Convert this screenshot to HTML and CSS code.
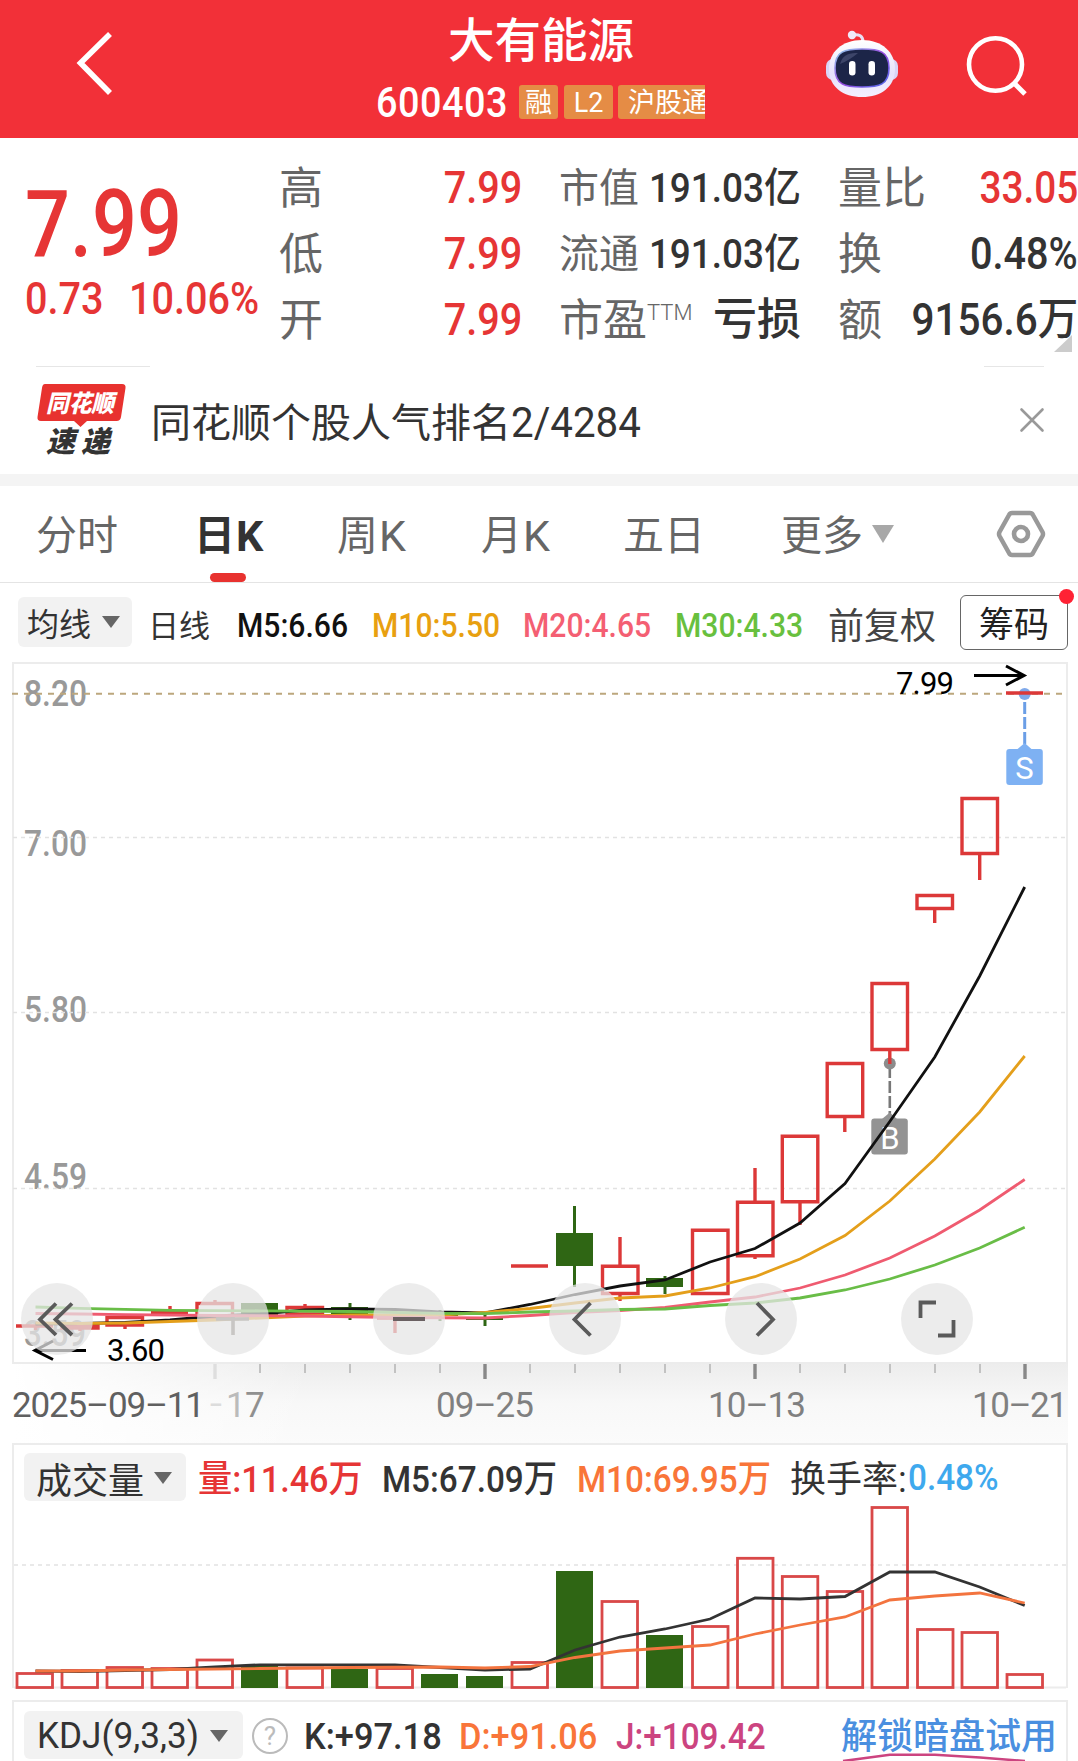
FILE: index.html
```html
<!DOCTYPE html>
<html lang="zh-CN">
<head>
<meta charset="utf-8">
<title>大有能源 600403</title>
<link rel="stylesheet" href="styles.css">
</head>
<body>
<div class="app">
  <header class="topbar">
    <svg class="back" width="44" height="70" viewBox="0 0 44 70"><path d="M39 5 9.500 34 39 64" fill="none" stroke="#fff" stroke-width="5.6"/></svg>
    <div class="heading">
      <h1>大有能源</h1>
      <div class="sub"><span class="code"><span class="n">600403</span></span><span class="tag t1">融</span><span class="tag t2">L2</span><span class="tag t3">沪股通</span></div>
    </div>
    <svg class="robot" width="74" height="68" viewBox="0 0 74 68">
      <defs>
        <linearGradient id="shell" x1="0" y1="0" x2="0" y2="1"><stop offset="0" stop-color="#fff"/><stop offset=".6" stop-color="#e6e2fb"/><stop offset="1" stop-color="#f4efff"/></linearGradient>
        <linearGradient id="rim" x1="0" y1="0" x2="1" y2="1"><stop offset="0" stop-color="#8fd0ea"/><stop offset=".5" stop-color="#9a4be0"/><stop offset="1" stop-color="#4d6bea"/></linearGradient>
      </defs>
      <path d="M27 5q11-2 11 7" fill="none" stroke="#e8e0f4" stroke-width="3"/>
      <circle cx="27" cy="5" r="4.2" fill="#f1eafa"/>
      <rect x="1" y="29" width="14" height="21" rx="7" fill="#d9d5f6"/><rect x="59" y="29" width="14" height="21" rx="7" fill="#d9d5f6"/>
      <path d="M37 10C57 10 70 22 70 39 70 57 56 67 37 67S4 57 4 39C4 22 17 10 37 10Z" fill="url(#shell)"/>
      <path d="M37 19C54 19 64 21 64 38S54 57 37 57 10 55 10 38 20 19 37 19Z" fill="#1c2548" stroke="url(#rim)" stroke-width="1.6"/>
      <path d="M15 34q3-12 18-11-8 7-18 11Z" fill="#4b5378" opacity=".7"/>
      <rect x="24" y="31" width="6.5" height="14.500" rx="3.2" fill="#fff"/><rect x="43.500" y="31" width="6.500" height="14.500" rx="3.200" fill="#fff"/>
    </svg>
    <svg class="search" width="64" height="64" viewBox="0 0 64 64"><ellipse cx="30.500" cy="30.500" rx="26.500" ry="26.200" fill="none" stroke="#fff" stroke-width="4.600"/><path d="M49 49 60 60" stroke="#fff" stroke-width="5"/></svg>
  </header>

  <section class="quote">
    <div class="price">
      <div class="last"><span class="n">7.99</span></div>
      <div class="chg"><span class="n">0.73</span><span class="n">10.06%</span></div>
    </div>
    <dl class="stats">
      <dt>高</dt><dd class="up"><span class="n">7.99</span></dd><dt class="sm">市值</dt><dd class="cap"><span class="n">191.03亿</span></dd><dt>量比</dt><dd class="up ratio"><span class="n">33.05</span></dd>
      <dt>低</dt><dd class="up"><span class="n">7.99</span></dd><dt class="sm">流通</dt><dd class="cap"><span class="n">191.03亿</span></dd><dt>换</dt><dd><span class="n">0.48%</span></dd>
      <dt>开</dt><dd class="up"><span class="n">7.99</span></dd><dt>市盈<sup>TTM</sup></dt><dd class="loss">亏损</dd><dt>额</dt><dd class="amount"><span class="n">9156.6万</span></dd>
    </dl>
    <i class="corner"></i>
  </section>

  <section class="notice">
    <svg class="logo" width="92" height="76" viewBox="0 0 92 76">
      <path d="M9 1H86q4 0 3.500 4L85 34q-.6 4-4.500 4H51l-6.500 6L38 38H5q-4 0-3.500-4L6 5q.5-4 3-4Z" fill="#e8322f"/>
      <text x="10" y="28.500" class="lg1" textLength="68" lengthAdjust="spacingAndGlyphs">同花顺</text>
      <text x="10" y="69" class="lg2" textLength="29" lengthAdjust="spacingAndGlyphs">速</text>
      <text x="45" y="69" class="lg2" textLength="29" lengthAdjust="spacingAndGlyphs">递</text>
    </svg>
    <p>同花顺个股人气排名<span class="n">2/4284</span></p>
    <svg class="close" width="26" height="26" viewBox="0 0 26 26"><path d="M2.500 2.500 23.500 23.500M23.500 2.500 2.500 23.500" stroke="#999" stroke-width="2.600" stroke-linecap="round"/></svg>
  </section>

  <nav class="tabs">
    <span>分时</span><span class="on">日<span class="k">K</span></span><span>周<span class="k">K</span></span><span>月<span class="k">K</span></span><span>五日</span>
    <span>更多<i class="tri grey"></i></span>
    <svg width="50" height="48" viewBox="0 0 50 48"><path d="M16 3H34Q36 3 37 5L46.500 22Q47.500 24 46.500 26L37 43Q36 45 34 45H16Q14 45 13 43L3.500 26Q2.500 24 3.500 22L13 5Q14 3 16 3Z" fill="none" stroke="#999" stroke-width="4.500"/><circle cx="25" cy="24" r="7" fill="none" stroke="#999" stroke-width="4.600"/></svg>
  </nav>

  <section class="ma">
    <span class="drop">均线<i class="tri"></i></span>
    <span class="dl">日线</span>
    <span class="n m5">M5:6.66</span><span class="n m10">M10:5.50</span><span class="n m20">M20:4.65</span><span class="n m30">M30:4.33</span>
    <span class="adj">前复权</span>
    <span class="chip">筹码<i></i></span>
  </section>

  <svg class="kline" width="1078" height="781" viewBox="0 662 1078 781">
    <defs>
      <linearGradient id="fadeY" x1="0" y1="0" x2="0" y2="1"><stop offset="0" stop-color="#ededed"/><stop offset=".5" stop-color="#f8f8f8"/><stop offset="1" stop-color="#fbfbfb"/></linearGradient>
      <linearGradient id="fadeX" x1="0" y1="0" x2="1" y2="0"><stop offset="0" stop-color="#fff"/><stop offset="1" stop-color="#fff" stop-opacity="0"/></linearGradient>
    </defs>
    <rect x="13" y="1364" width="1055" height="79" fill="url(#fadeY)"/>
    <rect x="13" y="1364" width="300" height="79" fill="url(#fadeX)"/>
    <rect x="13" y="663" width="1054" height="700" fill="#fff" stroke="#ececec" stroke-width="2"/>
    <g class="axis">
      <text x="24" y="705.500" textLength="63" lengthAdjust="spacingAndGlyphs">8.20</text><text x="24" y="855.500" textLength="63" lengthAdjust="spacingAndGlyphs">7.00</text>
      <text x="24" y="1022" textLength="63" lengthAdjust="spacingAndGlyphs">5.80</text><text x="24" y="1189" textLength="63" lengthAdjust="spacingAndGlyphs">4.59</text>
      <text x="24" y="1346" textLength="62" lengthAdjust="spacingAndGlyphs">3.59</text>
    </g>
    <path class="grid" d="M13 837.500H1067M13 1012.500H1067M13 1188.500H1067"/>
    <path d="M12 693.800H1066" stroke="#bca77d" stroke-width="2" stroke-dasharray="6 6"/>
    <text class="note" x="896" y="694" textLength="58">7.99</text>
    <path class="arrow" d="M974 675.500H1024M1006 666 1024 675.500 1006 685"/>
    <text class="note" x="107" y="1361" textLength="58">3.60</text>
    <path class="arrow" d="M86 1350.500H35M53 1359.500 35 1350.500 53 1341"/>

    <path d="M1024.700 702V744" stroke="#6b9ee6" stroke-width="3" stroke-dasharray="12 3"/>
    <circle cx="1024.700" cy="694" r="6" fill="#7fa9ea"/>
    <path d="M1017 749.500 1024.700 743 1032 749.500Z" fill="#7eb1f3"/><rect x="1006.300" y="749" width="36.500" height="36" rx="3" fill="#7eb1f3"/>
    <text class="mark" x="1024.500" y="778.500">S</text>
    <path d="M889.800 1066V1114" stroke="#777" stroke-width="2.600" stroke-dasharray="12 3"/>
    <circle cx="889.800" cy="1063.500" r="6" fill="#8c8c8c"/>
    <path d="M882 1119 889.800 1112.500 897 1119Z" fill="#939393"/><rect x="871.300" y="1118.500" width="36.500" height="36" rx="3" fill="#939393"/>
    <text class="mark" x="890" y="1149">B</text>

    <path class="red" d="M16 1326H53M35.500 1326V1330
      M62 1325H98V1328H62ZM80 1328V1331
      M107 1317.500H142.500V1325H107ZM125 1325V1329
      M151 1312.700H188M170 1306V1313
      M197 1303.500H232.500V1318H197ZM215 1300V1303
      M287 1307.500H322.500V1314H287ZM305 1304V1307
      M377 1318H413M395 1318V1333
      M511 1266H548
      M602.500 1266.300H638V1293.500H602.500ZM620 1237V1266M620 1293V1301
      M692.500 1230.300H728V1293.500H692.500Z
      M737.500 1202.300H773V1255.700H737.500ZM755 1168V1202M755 1256V1259
      M782.300 1136.300H817.800V1201.700H782.300ZM800 1202V1225
      M827.200 1063.500H862.700V1116.500H827.200ZM844.800 1117V1132
      M872 983.500H907.500V1049.500H872ZM889.800 1050V1064
      M917 895.500H952.500V908.500H917ZM934.700 909V923
      M962 798.500H997.500V853.500H962ZM979.700 854V880
      M1006 693H1043"/>
    <path fill="#2f6614" d="M241 1303h37v12h-37zM331 1307h37v7h-37zM348.500 1303h3v17h-3zM421 1313h37v3h-37zM438.500 1310h3v11h-3zM466 1317.500h37v2.500h-37zM483.500 1313h3v13h-3zM556 1233h37v33h-37zM573 1206h3v81h-3zM646 1278h37v9h-37zM663.500 1276h3v18h-3z"/>
    <g class="lines">
      <polyline stroke="#111" points="35.500,1324 80,1323.500 125,1322.500 170,1320 215,1316 260,1314 305,1310 350,1309 395,1309.500 440,1312 485,1313 530,1304.500 575,1294.500 620,1286 665,1280 710,1262 755,1248.500 800,1223 845,1183.500 889.800,1121.500 934.800,1057 979.700,976 1024.700,887"/>
      <polyline stroke="#e49f1b" points="35.500,1323 80,1323.500 125,1323 170,1321.500 215,1320 260,1318 305,1316 350,1315 395,1315 440,1315 485,1312.500 530,1308.500 575,1303 620,1298 665,1296 710,1288 755,1276.700 800,1259 845,1235.500 889.800,1201 934.800,1159 979.700,1112 1024.700,1056"/>
      <polyline stroke="#ef5b70" points="35.500,1313.500 80,1314 125,1314.700 215,1315.500 305,1316 395,1317.500 485,1318 530,1315.500 575,1312.500 620,1310.500 665,1307.500 710,1302 755,1297 800,1288 845,1275 889.800,1258 934.800,1236 979.700,1210 1024.700,1179.500"/>
      <polyline stroke="#69bd47" points="35.500,1307 80,1308.300 125,1309.300 170,1310.300 260,1310.800 350,1311.500 440,1313.300 485,1313.700 530,1312 575,1311 620,1309.500 665,1309 710,1305.500 755,1303 800,1298 845,1290 889.800,1279 934.800,1265 979.700,1248 1024.700,1227.300"/>
    </g>

    <g fill="#e5e5e5" fill-opacity=".74"><circle cx="57" cy="1319" r="36"/><circle cx="233" cy="1319" r="36"/><circle cx="409" cy="1319" r="36"/><circle cx="585" cy="1319" r="36"/><circle cx="761" cy="1319" r="36"/><circle cx="937" cy="1319" r="36"/></g>
    <path d="M216 1319H249M233 1317V1335" stroke="#c8c6c4" stroke-width="3.600" fill="none"/>
    <path d="M393 1319H425" stroke="#6a6062" stroke-width="4"/>
    <path class="ctl" d="M56 1303.500 40 1319.500 56 1335M72 1303.500 55.500 1319.500 72 1335M590.500 1303 574.500 1319.500 590.500 1335.500M757 1303 773 1319.500 757 1335.500M936 1302.500H920.500V1318M938 1335.500H953.500V1320"/>

    <path stroke="#c2c2c2" stroke-width="2" d="M260 1364v9M305 1364v9M350 1364v9M395 1364v9M440 1364v9M530 1364v9M575 1364v9M620 1364v9M665 1364v9M710 1364v9M800 1364v9M845 1364v9M890 1364v9M935 1364v9M980 1364v9"/>
    <path stroke="#888" stroke-width="3.400" d="M485 1364v15M755 1364v15M1025 1364v15"/>
    <path stroke="#dedede" stroke-width="3.400" d="M215 1364v15"/>
    <g class="dates">
      <text class="first" x="12" y="1417" textLength="193">2025–09–11</text>
      <text x="209" y="1417" textLength="14" fill="#dcdcdc" lengthAdjust="spacingAndGlyphs">–</text><text x="226" y="1417" fill="#bbb">1</text><text x="245" y="1417" fill="#909090">7</text>
      <text x="436" y="1417" textLength="98">09–25</text><text x="708" y="1417" textLength="98">10–13</text><text x="972" y="1417" textLength="96">10–21</text>
    </g>
  </svg>

  <section class="panel vol">
    <div class="row">
      <span class="drop">成交量<i class="tri"></i></span>
      <span class="n up amt">量:11.46万</span><span class="n">M5:67.09万</span><span class="n orange">M10:69.95万</span><span class="rate">换手率:</span><span class="n blue">0.48%</span>
    </div>
    <svg width="1052" height="185" viewBox="14 1504 1052 185">
      <path class="grid" d="M14 1565H1066" stroke-width="2"/>
      <path fill="none" stroke="#ececec" stroke-width="2" d="M14 1687.500H1066"/>
      <g class="vbar">
        <rect x="17" y="1673.500" width="35.500" height="14"/><rect x="62" y="1670.500" width="35.500" height="17"/><rect x="107" y="1667.500" width="35.500" height="20"/><rect x="152" y="1668.500" width="35.500" height="19"/><rect x="197" y="1660" width="35.500" height="27.500"/><rect x="287" y="1668" width="35.500" height="19.500"/><rect x="377" y="1668.500" width="35.500" height="19"/><rect x="512" y="1662.500" width="35.500" height="25"/><rect x="602" y="1601.500" width="35.500" height="86"/><rect x="692.500" y="1626.500" width="35.500" height="61"/><rect x="737.500" y="1558.300" width="35.500" height="129.200"/><rect x="782.300" y="1576.500" width="35.500" height="111"/><rect x="827.200" y="1591.500" width="35.500" height="96"/><rect x="872" y="1507.500" width="35.500" height="180"/><rect x="917.500" y="1629.500" width="35.500" height="58"/><rect x="962" y="1632.500" width="35.500" height="55"/><rect x="1007" y="1674.500" width="35.500" height="13"/>
      </g>
      <path fill="#2f6614" d="M241 1666h37v22h-37zM331 1669h37v19h-37zM421 1674h37v14h-37zM466 1676h37v12h-37zM556 1571h37v117h-37zM646 1635h37v53h-37z"/>
      <g class="lines">
        <polyline stroke="#333" points="35.500,1671 80,1671.500 125,1670.500 170,1669.500 215,1667 260,1664.800 395,1664.800 440,1667.500 485,1670 530,1669 575,1650 620,1637 665,1629 710,1619 755,1598 800,1599 845,1596.500 889.800,1572 934.800,1572 979.700,1587 1024.700,1605.500"/>
        <polyline stroke="#f3743f" points="35.500,1671 80,1671 125,1670 170,1669.500 260,1668.500 350,1667.500 440,1667 485,1668 530,1666.500 575,1657.500 620,1651 665,1648 710,1645 755,1634 800,1625 845,1617 889.800,1600 934.800,1596 979.700,1593 1024.700,1603"/>
      </g>
    </svg>
  </section>

  <section class="panel kdj">
    <div class="row">
      <span class="drop"><span class="n">KDJ(9,3,3)</span><i class="tri"></i></span>
      <span class="help">?</span>
      <span class="n">K:+97.18</span><span class="n orange">D:+91.06</span><span class="n pink">J:+109.42</span><a class="unlock">解锁暗盘试用</a>
    </div>
    <svg class="jline" width="190" height="8" viewBox="840 1753 190 8"><path d="M843 1761 889.800 1754.800H935L980 1757.500 1025 1761" fill="none" stroke="#cc4480" stroke-width="2.600"/></svg>
  </section>
</div>
</body>
</html>
```

FILE: styles.css
```css
* { box-sizing: border-box; }
body { margin: 0; background: #fff; color: #333; font-family: Roboto, "Noto Sans CJK SC", sans-serif; }
.app { width: 1078px; height: 1761px; overflow: hidden; }
h1, p, dl, dd { margin: 0; }
svg { display: block; flex: none; }
.n { display: inline-block; font-weight: 500; white-space: nowrap; transform: scaleX(.9); transform-origin: 0 50%; }
.up { color: #e63535; }
.orange { color: #f97539; }
.blue { color: #3ea9ee; }
.pink { color: #cc4480; }

.topbar { height: 138px; background: #f23038; color: #fff; display: flex; }
.back { margin: 29px 0 0 71px; }
.heading { width: 330px; margin-left: 261px; flex: none; }
h1 { font-size: 46.5px; font-weight: 500; line-height: 54px; padding-top: 14px; width: 330px; text-align: center; }
.sub { display: flex; align-items: center; height: 34px; margin-top: 17px; width: 330px; }
.code { width: 143px; font-size: 42px; line-height: 36px; padding-top: 2px; letter-spacing: .6px; }
.tag { height: 34px; line-height: 36px; font-size: 27px; background: #e58c45; border-radius: 3px; text-align: center; white-space: nowrap; overflow: hidden; flex: none; }
.t1 { width: 39px; }
.t2 { width: 49px; margin-left: 6px; }
.t3 { width: 87px; margin-left: 5px; padding-left: 10px; text-align: left; border-radius: 3px 0 0 3px; }
.robot { margin: 30px 0 0 119px; }
.search { margin: 34px 0 0 66px; }

.quote { height: 228px; display: flex; position: relative; }
.price { width: 279px; padding-left: 25px; color: #e63535; }
.last { font-size: 92px; line-height: 100px; padding-top: 37px; }
.last .n { transform: scaleX(.86); }
.chg { display: flex; font-size: 44.5px; line-height: 50px; margin-top: -1px; }
.chg .n { transform: scaleX(.89); }
.chg .n:first-child { width: 104px; flex: none; }
.stats { display: grid; width: 799px; grid-template-columns: 120px 123px 158px 121px 121px 156px; grid-template-rows: repeat(3, 66px); padding-top: 17px; font-size: 44px; line-height: 66px; }
.stats dt { color: #666; white-space: nowrap; padding-top: 1px; }
.stats dd { white-space: nowrap; display: flex; justify-content: flex-end; }
.stats .n { transform-origin: 100% 50%; }
.stats dt:nth-of-type(3n+2), .stats dt:nth-of-type(3n) { padding-left: 37px; }
.stats .sm { font-size: 40px; }
.stats .cap { font-size: 41px; }
.stats .loss { font-weight: 500; }
.stats .ratio .n { transform: scaleX(.88); }
.stats .amount .n { transform: scaleX(.92); }
sup { font-size: 22px; font-weight: 300; line-height: 0; vertical-align: 16px; }
.corner { position: absolute; left: 1054px; top: 197px; border: solid transparent; border-width: 0 0 17px 18px; border-bottom-color: #ccc; }

.notice { height: 120px; border-bottom: 12px solid #f4f4f4; display: flex; position: relative; }
.notice::before, .notice::after { content: ""; position: absolute; top: 0; height: 1px; background: #e6e6e6; }
.notice::before { left: 36px; width: 114px; }
.notice::after { left: 984px; width: 60px; }
.logo { margin: 17px 0 0 36px; }
.lg1 { font: italic 900 24px "Noto Sans CJK SC", sans-serif; fill: #fff; }
.lg2 { font: italic 900 29px "Noto Sans CJK SC", sans-serif; fill: #333; }
.notice p { margin-left: 23px; width: 868px; font-size: 40px; line-height: 114px; height: 108px; }
.notice .n { font-weight: 400; font-size: 42px; transform: scaleX(.96); }
.close { margin-top: 41px; }

.tabs { height: 97px; border-bottom: 1px solid #e4e4e4; display: grid; grid-template-rows: 96px; grid-template-columns: 158px 143px 144px 142px 158px 215px 60px; padding-left: 36px; font-size: 41px; line-height: 93px; color: #666; }
.tabs > span { white-space: nowrap; display: flex; align-items: center; padding-top: 5px; }
.tabs .on { color: #333; font-weight: 700; position: relative; }
.on::after { content: ""; position: absolute; left: 16px; bottom: 0; width: 36px; height: 9px; border-radius: 5px; background: #e8322f; }
.tabs .k { font-size: 43px; padding-left: 1px; }
.tabs svg { margin-top: 24px; }
.tri { display: inline-block; border: solid transparent; border-width: 12px 9px 0; border-top-color: #666; }
.tri.grey { border-width: 18px 11px 0; border-top-color: #a8a8a8; margin: -5px 0 0 9px; }

.ma { height: 79px; display: grid; grid-template-columns: 130px 89px 135px 151px 152px 153px 132px 108px; align-items: center; padding: 0 0 1px 18px; font-size: 34px; }
.drop { background: #f2f2f2; border-radius: 6px; display: flex; align-items: center; height: 50px; color: #333; white-space: nowrap; }
.ma .drop { width: 114px; font-size: 32px; padding-left: 9px; gap: 11px; }
.dl { font-size: 31px; padding-top: 2px; }
.ma .n { padding-top: 5px; transform: scaleX(.885); }
.m5 { color: #111; } .m10 { color: #e8a010; } .m20 { color: #f45f73; } .m30 { color: #68c03e; }
.adj { font-size: 36px; color: #444; padding-top: 2px; }
.chip { height: 55px; line-height: 59px; border: 1.500px solid #666; border-radius: 6px; text-align: center; font-size: 35px; color: #222; position: relative; }
.chip i { position: absolute; right: -7px; top: -7px; width: 15px; height: 15px; border-radius: 50%; background: #ff2234; }

.kline text { font-family: Roboto, sans-serif; }
.axis text { font-size: 37px; font-weight: 500; fill: #999; }
.grid { fill: none; stroke: #e2e2e2; stroke-width: 1.300; stroke-dasharray: 4 4; }
.kline .note { font-size: 31px; fill: #000; }
.arrow { fill: none; stroke: #000; stroke-width: 3; }
.kline .mark { font-size: 31px; fill: #fff; text-anchor: middle; }
.red { fill: none; stroke: #dc3838; stroke-width: 3.400; }
.lines polyline { fill: none; stroke-width: 2.800; }
.ctl { fill: none; stroke: #5a5a5a; stroke-width: 3.800; }
.dates text { font-size: 35px; }
.dates { fill: #808080; }
.dates .first { fill: #606060; }

.panel { margin: 0 10px 0 12px; border: 2px solid #ececec; border-bottom: 0; }
.vol { height: 245px; }
.row { display: grid; align-items: center; font-size: 37px; white-space: nowrap; }
.vol .row { height: 59px; padding-left: 10px; grid-template-columns: 174px 184px 195px 213px 118px 120px; }
.vol .row > :not(.drop) { padding-top: 3px; }
.vol .row > .blue { padding-top: 5px; }
.vol .drop { width: 162px; height: 48px; font-size: 36px; padding: 2px 0 0 12px; gap: 10px; margin-top: 5px; }
.amt.n { transform: scaleX(.925); }
.rate { font-size: 36px; }
.vbar rect { fill: none; stroke: #d94848; stroke-width: 2.800; }
.kdj { margin-top: 12px; height: 61px; position: relative; }
.kdj .row { height: 60px; padding: 9px 0 0 10px; align-items: start; grid-template-columns: 228px 52px 155px 157px 225px 220px; line-height: 52px; }
.kdj .drop { width: 219px; height: 48px; padding: 2px 0 0 13px; }
.kdj .drop .n { width: 173px; transform: scaleX(.95); flex: none; font-weight: 400; }
.kdj .row > .n:nth-child(3), .kdj .row > .n:nth-child(4) { transform: scaleX(.93); }
.help { width: 36px; height: 36px; margin-top: 7px; border: 2.500px solid #bbb; border-radius: 50%; color: #bbb; font-size: 26px; line-height: 32px; text-align: center; }
.unlock { color: #4a8fe0; font-size: 36px; font-weight: 500; }
.jline { position: absolute; left: 826px; top: 51px; }
```
